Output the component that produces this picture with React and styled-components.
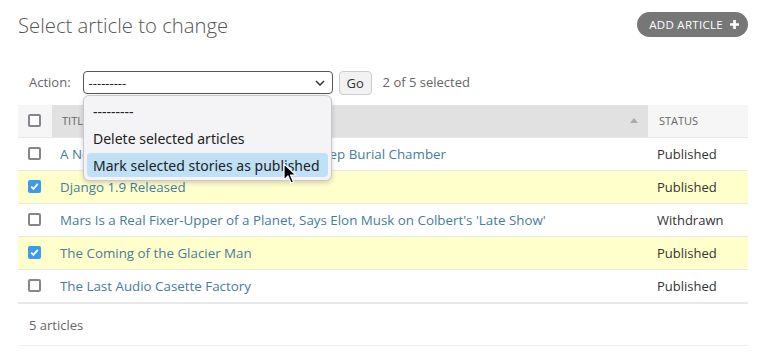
import React from 'react'
import styled, {createGlobalStyle} from 'styled-components'

const GlobalStyle = createGlobalStyle`
  body {
    margin: 0;
    background: #fff;
    font-family: "Open Sans", "Liberation Sans", sans-serif;
    color: #333;
  }
`

const articles = [
    {title: 'A New Discovery in the Ancient Sands: A Deep Burial Chamber', status: 'Published', checked: false},
    {title: 'Django 1.9 Released', status: 'Published', checked: true},
    {title: "Mars Is a Real Fixer-Upper of a Planet, Says Elon Musk on Colbert's 'Late Show'", status: 'Withdrawn', checked: false},
    {title: 'The Coming of the Glacier Man', status: 'Published', checked: true},
    {title: 'The Last Audio Casette Factory', status: 'Published', checked: false},
]

const Checkbox = ({checked}) => (
    <Box checked={checked}>
        {checked && (
            <svg width="9" height="9" viewBox="0 0 9 9">
                <path d="M1.2 4.6 L3.5 6.9 L7.8 1.9" fill="none" stroke="#fff" strokeWidth="1.8"/>
            </svg>
        )}
    </Box>
)

const App = () => {
    return (
        <Page>
            <GlobalStyle/>
            <Header>
                <Title>Select article to change</Title>
                <AddButton>
                    Add article
                    <svg width="11" height="11" viewBox="0 0 11 11">
                        <path d="M5.5 1 V10 M1 5.5 H10" stroke="#fff" strokeWidth="2.6"/>
                    </svg>
                </AddButton>
            </Header>

            <Actions>
                <Label>Action:</Label>
                <Select>
                    <span>---------</span>
                    <svg width="10" height="6" viewBox="0 0 10 6">
                        <path d="M1 1 L5 5 L9 1" fill="none" stroke="#333" strokeWidth="1.5"/>
                    </svg>
                </Select>
                <GoButton>Go</GoButton>
                <Counter>2 of 5 selected</Counter>

                <Menu>
                    <MenuItem>---------</MenuItem>
                    <MenuItem>Delete selected articles</MenuItem>
                    <MenuItem active>Mark selected stories as published</MenuItem>
                    <Cursor width="14" height="22" viewBox="0 0 14 22">
                        <path d="M1 1 L1 17 L5 13 L8 20 L10.5 19 L7.5 12 L13 12 Z" fill="#000" stroke="#fff"
                              strokeWidth="1.2" strokeLinejoin="round"/>
                    </Cursor>
                </Menu>
            </Actions>

            <Table>
                <colgroup>
                    <col style={{width: 34}}/>
                    <col/>
                    <col style={{width: 100}}/>
                </colgroup>
                <thead>
                <tr>
                    <Th><Checkbox/></Th>
                    <Th sorted>
                        <HeadInner>
                            Title
                            <svg width="8" height="5" viewBox="0 0 8 5">
                                <path d="M0 5 L4 0 L8 5 Z" fill="#aaa"/>
                            </svg>
                        </HeadInner>
                    </Th>
                    <Th>Status</Th>
                </tr>
                </thead>
                <tbody>
                {articles.map((a) => (
                    <Row key={a.title} selected={a.checked}>
                        <CheckCell><Checkbox checked={a.checked}/></CheckCell>
                        <TitleCell><a href="#">{a.title}</a></TitleCell>
                        <StatusCell>{a.status}</StatusCell>
                    </Row>
                ))}
                </tbody>
            </Table>
            <Paginator>5 articles</Paginator>
        </Page>
    )
}

const Page = styled.div`
  padding: 0 17px 0 18px;
  font-size: 13px;
`

const Header = styled.div`
  height: 50px;
  display: flex;
  justify-content: space-between;
  align-items: center;
`

const Title = styled.h1`
  margin: 0;
  font-size: 20.3px;
  font-weight: 300;
  color: #555;
  padding-bottom: 1px;
`

const AddButton = styled.a`
  display: flex;
  align-items: center;
  gap: 6px;
  height: 25px;
  box-sizing: border-box;
  padding: 0 8px 0 12px;
  margin-top: -1px;
  background: #777;
  border-radius: 13px;
  color: #fff;
  font-size: 11.5px;
  text-transform: uppercase;
  letter-spacing: 0.3px;
`

const Actions = styled.div`
  position: relative;
  height: 55px;
  box-sizing: border-box;
  padding: 21px 0 0 11px;
  display: flex;
  align-items: flex-start;
`

const Label = styled.span`
  line-height: 23px;
  color: #666;
  margin-right: 12px;
`

const Select = styled.div`
  width: 250px;
  height: 23px;
  box-sizing: border-box;
  border: 1px solid #555;
  border-radius: 4px;
  display: flex;
  align-items: center;
  justify-content: space-between;
  padding: 0 7px 0 5px;
  font-size: 13px;
  color: #222;
`

const GoButton = styled.div`
  margin-left: 6px;
  width: 33px;
  height: 24px;
  box-sizing: border-box;
  border: 1px solid #ccc;
  border-radius: 4px;
  background: #f2f2f2;
  display: flex;
  align-items: center;
  justify-content: center;
  color: #333;
`

const Counter = styled.span`
  margin-left: 11px;
  line-height: 23px;
  color: #666;
`

const Menu = styled.div`
  position: absolute;
  left: 65px;
  top: 45px;
  width: 249px;
  box-sizing: border-box;
  padding-bottom: 3px;
  background: #f4f4f6;
  border: 1px solid #c8c8cc;
  border-radius: 6px;
  box-shadow: 0 2px 5px rgba(0, 0, 0, 0.18);
  font-family: "Noto Sans", sans-serif;
  font-size: 14px;
  color: #222;
  z-index: 2;
`

const MenuItem = styled.div`
  height: 24px;
  margin: 3px 3px 0;
  padding-left: 6px;
  display: flex;
  align-items: center;
  border-radius: 4px;
  background: ${(p) => (p.active ? '#bfe0f5' : 'transparent')};
`

const Cursor = styled.svg`
  position: absolute;
  left: 199px;
  top: 67px;
`

const Table = styled.table`
  width: 100%;
  table-layout: fixed;
  border-collapse: collapse;
`

const Th = styled.th`
  box-sizing: border-box;
  height: 32px;
  padding: 0 0 0 ${(p) => (p.sorted ? '10px' : '11px')};
  text-align: left;
  font-size: 11px;
  font-weight: 400;
  text-transform: uppercase;
  color: #666;
  background: ${(p) => (p.sorted ? '#e1e1e1' : '#f6f6f6')};
  vertical-align: middle;

  &:first-child {
    padding-left: 10px;
  }
`

const HeadInner = styled.div`
  display: flex;
  justify-content: space-between;
  align-items: center;
  padding-right: 10px;
`

const Row = styled.tr`
  background: ${(p) => (p.selected ? '#ffffcc' : '#fff')};
  border-top: 1px solid #e8e8e8;

  &:last-child {
    border-bottom: 2px solid #e8e8e8;
  }
`

const CheckCell = styled.td`
  height: 32px;
  padding: 0 0 0 10px;
  vertical-align: middle;
`

const TitleCell = styled.td`
  padding: 0 0 0 8px;
  white-space: nowrap;

  a {
    color: #447e9b;
    text-decoration: none;
    font-size: 13.35px;
  }
`

const StatusCell = styled.td`
  padding: 0 0 0 9px;
  color: #333;
`

const Box = styled.span`
  display: flex;
  align-items: center;
  justify-content: center;
  width: 13px;
  height: 13px;
  box-sizing: border-box;
  border-radius: 2px;
  border: ${(p) => (p.checked ? 'none' : '2px solid #85858f')};
  background: ${(p) => (p.checked ? '#3d9ae8' : '#fff')};
`

const Paginator = styled.div`
  height: 42px;
  box-sizing: border-box;
  padding: 2px 0 0 11px;
  display: flex;
  align-items: center;
  color: #666;
  border-bottom: 1px solid #eee;
`

export default App
